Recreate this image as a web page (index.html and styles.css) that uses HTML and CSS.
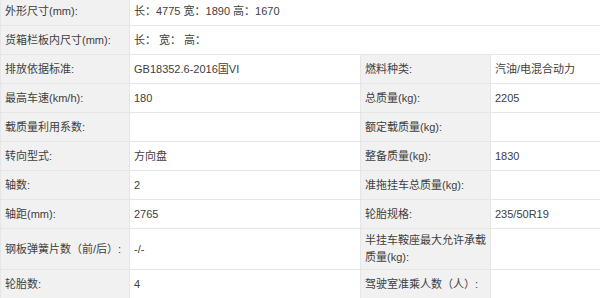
FILE: index.html
```html
<!DOCTYPE html>
<html lang="zh-CN">
<head>
<meta charset="utf-8">
<title>参数</title>
<link rel="stylesheet" href="styles.css">
</head>
<body>
<table class="spec">
  <colgroup>
    <col class="c1"><col class="c2"><col class="c3"><col class="c4">
  </colgroup>
  <tbody>
    <tr><td class="lbl">外形尺寸(mm):</td><td colspan="3">长：4775 宽：1890 高：1670</td></tr>
    <tr><td class="lbl">货箱栏板内尺寸(mm):</td><td colspan="3">长：&nbsp;宽：&nbsp;高：</td></tr>
    <tr><td class="lbl">排放依据标准:</td><td>GB18352.6-2016国VI</td><td class="lbl">燃料种类:</td><td>汽油/电混合动力</td></tr>
    <tr><td class="lbl">最高车速(km/h):</td><td>180</td><td class="lbl">总质量(kg):</td><td>2205</td></tr>
    <tr><td class="lbl">载质量利用系数:</td><td></td><td class="lbl">额定载质量(kg):</td><td></td></tr>
    <tr><td class="lbl">转向型式:</td><td>方向盘</td><td class="lbl">整备质量(kg):</td><td>1830</td></tr>
    <tr><td class="lbl">轴数:</td><td>2</td><td class="lbl">准拖挂车总质量(kg):</td><td></td></tr>
    <tr><td class="lbl">轴距(mm):</td><td>2765</td><td class="lbl">轮胎规格:</td><td>235/50R19</td></tr>
    <tr><td class="lbl">钢板弹簧片数（前/后）:</td><td>-/-</td><td class="lbl">半挂车鞍座最大允许承载质量(kg):</td><td></td></tr>
    <tr><td class="lbl">轮胎数:</td><td>4</td><td class="lbl">驾驶室准乘人数（人）:</td><td></td></tr>
  </tbody>
</table>
</body>
</html>
```
FILE: styles.css
```css
html, body {
  margin: 0;
  padding: 0;
  background: #ffffff;
  overflow: hidden;
}
body {
  font-family: "Liberation Sans", Arial, "Noto Sans CJK SC", sans-serif;
  font-size: 11px;
  color: #404040;
}
.spec {
  border-collapse: collapse;
  table-layout: fixed;
  width: 620px;
  margin-top: -4px;
}
.c1 { width: 129px; }
.c2 { width: 231px; }
.c3 { width: 130px; }
.c4 { width: 130px; }
.spec td {
  border: 1px solid #e6e6e6;
  padding: 3px 4px;
  height: 22px;
  line-height: 17px;
  vertical-align: middle;
  text-align: left;
  word-break: break-all;
}
.spec td.lbl {
  background: #f1f1f1;
}
```
